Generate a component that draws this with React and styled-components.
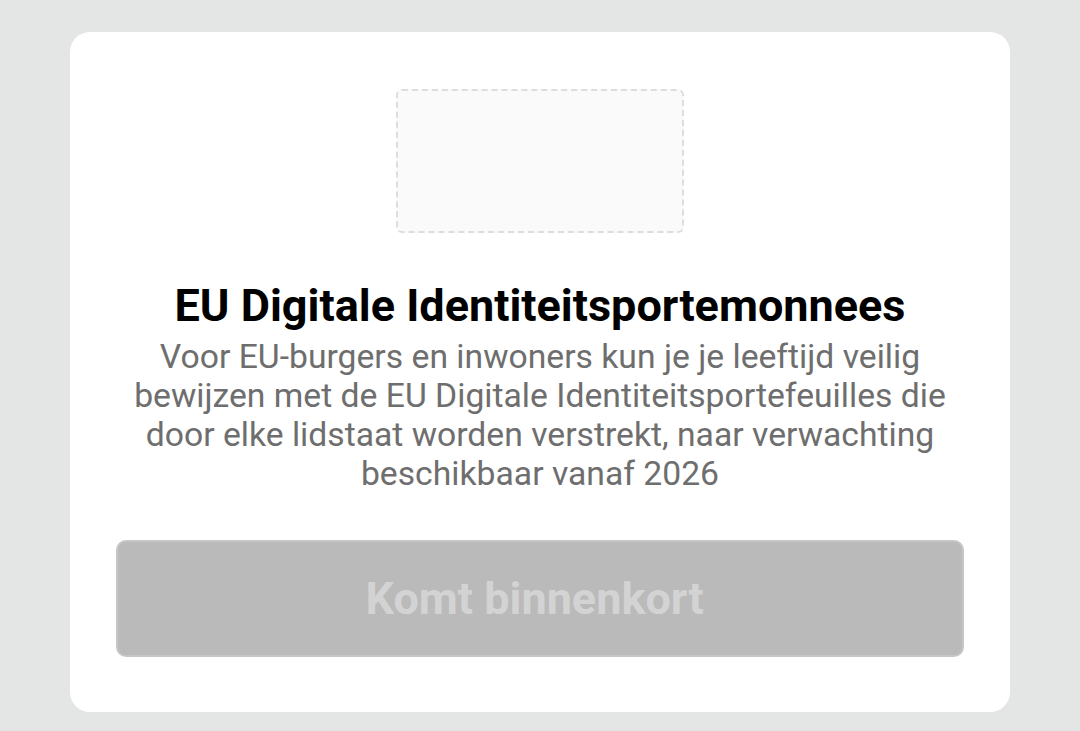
import React from 'react';
import styled, { createGlobalStyle } from 'styled-components';

const GlobalStyle = createGlobalStyle`
  html, body {
    margin: 0;
    padding: 0;
    background: #e4e5e5;
    font-family: Roboto, "Liberation Sans", sans-serif;
  }
`;

const Page = styled.div`
  width: 1080px;
  height: 731px;
  box-sizing: border-box;
  padding: 32px 70px 19px;
  display: flex;
`;

const Card = styled.section`
  flex: 1;
  background: #ffffff;
  border-radius: 20px;
  padding: 57px 46px 0;
  display: flex;
  flex-direction: column;
  align-items: center;
`;

const Placeholder = styled.div`
  width: 288px;
  height: 144px;
  box-sizing: border-box;
  border: 2px dashed #dddddd;
  border-radius: 6px;
  background: #fafafa;
`;

const Title = styled.h2`
  margin: 47px 0 0;
  font-size: 45px;
  line-height: 52px;
  font-weight: 700;
  color: #000000;
  text-align: center;
  white-space: nowrap;
`;

const Body = styled.p`
  margin: 5px 0 0;
  font-size: 33.7px;
  line-height: 39px;
  color: #6e6e6e;
  text-align: center;
  white-space: nowrap;
`;

const Button = styled.button`
  margin-top: 47px;
  width: 100%;
  height: 117px;
  box-sizing: border-box;
  padding: 0 11px 0 0;
  border: 2px solid #c6c6c6;
  border-radius: 10px;
  background: #bababa;
  color: #d3d3d3;
  font-family: Roboto, "Liberation Sans", sans-serif;
  font-size: 45px;
  font-weight: 700;
`;

export default function App() {
  return (
    <>
      <GlobalStyle />
      <Page>
        <Card>
          <Placeholder />
          <Title>EU Digitale Identiteitsportemonnees</Title>
          <Body>
            Voor EU-burgers en inwoners kun je je leeftijd veilig
            <br />
            bewijzen met de EU Digitale Identiteitsportefeuilles die
            <br />
            door elke lidstaat worden verstrekt, naar verwachting
            <br />
            beschikbaar vanaf 2026
          </Body>
          <Button disabled>Komt binnenkort</Button>
        </Card>
      </Page>
    </>
  );
}
